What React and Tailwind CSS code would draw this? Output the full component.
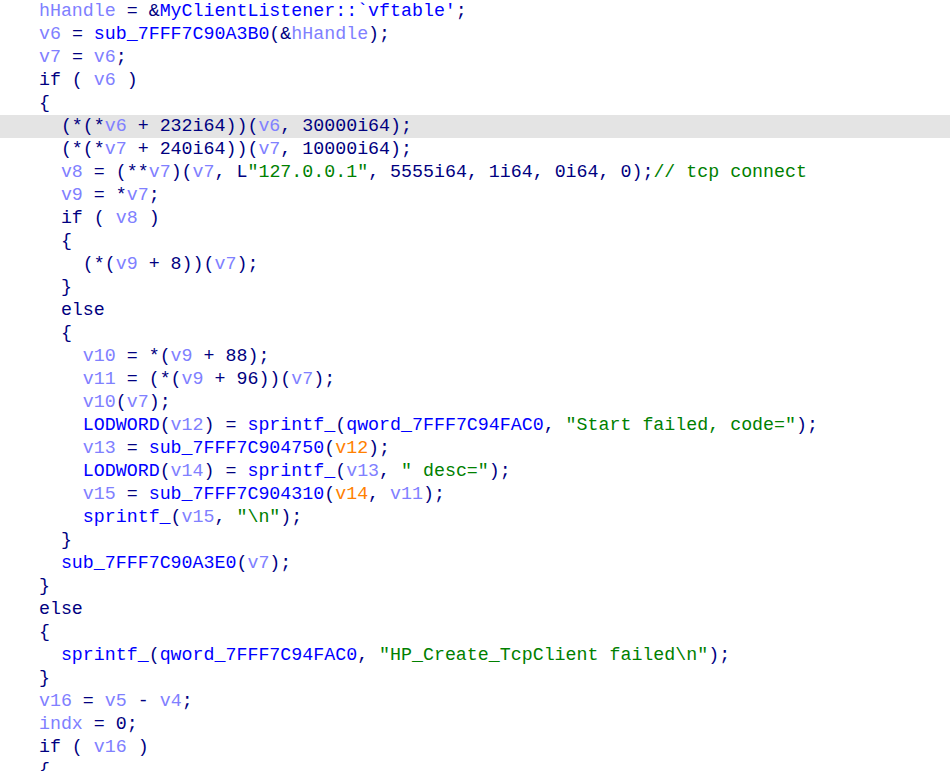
import React from "react";

const C = {
  N: "text-[#000080]",
  B: "text-[#0000ff]",
  V: "text-[#8080ff]",
  G: "text-[#008000]",
  O: "text-[#ff8000]",
};

const L = (indent, ...segs) => ({ indent, segs });

const lines = [
  L(2, ["V", "hHandle"], ["N", " = &"], ["B", "MyClientListener::`vftable'"], ["N", ";"]),
  L(2, ["V", "v6"], ["N", " = "], ["B", "sub_7FFF7C90A3B0"], ["N", "(&"], ["V", "hHandle"], ["N", ");"]),
  L(2, ["V", "v7"], ["N", " = "], ["V", "v6"], ["N", ";"]),
  L(2, ["N", "if ( "], ["V", "v6"], ["N", " )"]),
  L(2, ["N", "{"]),
  { ...L(4, ["N", "(*(*"], ["V", "v6"], ["N", " + 232i64))("], ["V", "v6"], ["N", ", 30000i64);"]), hl: true },
  L(4, ["N", "(*(*"], ["V", "v7"], ["N", " + 240i64))("], ["V", "v7"], ["N", ", 10000i64);"]),
  L(4, ["V", "v8"], ["N", " = (**"], ["V", "v7"], ["N", ")("], ["V", "v7"], ["N", ", L"], ["G", "\"127.0.0.1\""], ["N", ", 5555i64, 1i64, 0i64, 0);"], ["G", "// tcp connect"]),
  L(4, ["V", "v9"], ["N", " = *"], ["V", "v7"], ["N", ";"]),
  L(4, ["N", "if ( "], ["V", "v8"], ["N", " )"]),
  L(4, ["N", "{"]),
  L(6, ["N", "(*("], ["V", "v9"], ["N", " + 8))("], ["V", "v7"], ["N", ");"]),
  L(4, ["N", "}"]),
  L(4, ["N", "else"]),
  L(4, ["N", "{"]),
  L(6, ["V", "v10"], ["N", " = *("], ["V", "v9"], ["N", " + 88);"]),
  L(6, ["V", "v11"], ["N", " = (*("], ["V", "v9"], ["N", " + 96))("], ["V", "v7"], ["N", ");"]),
  L(6, ["V", "v10"], ["N", "("], ["V", "v7"], ["N", ");"]),
  L(6, ["B", "LODWORD"], ["N", "("], ["V", "v12"], ["N", ") = "], ["B", "sprintf_"], ["N", "("], ["B", "qword_7FFF7C94FAC0"], ["N", ", "], ["G", "\"Start failed, code=\""], ["N", ");"]),
  L(6, ["V", "v13"], ["N", " = "], ["B", "sub_7FFF7C904750"], ["N", "("], ["O", "v12"], ["N", ");"]),
  L(6, ["B", "LODWORD"], ["N", "("], ["V", "v14"], ["N", ") = "], ["B", "sprintf_"], ["N", "("], ["V", "v13"], ["N", ", "], ["G", "\" desc=\""], ["N", ");"]),
  L(6, ["V", "v15"], ["N", " = "], ["B", "sub_7FFF7C904310"], ["N", "("], ["O", "v14"], ["N", ", "], ["V", "v11"], ["N", ");"]),
  L(6, ["B", "sprintf_"], ["N", "("], ["V", "v15"], ["N", ", "], ["G", "\"\\n\""], ["N", ");"]),
  L(4, ["N", "}"]),
  L(4, ["B", "sub_7FFF7C90A3E0"], ["N", "("], ["V", "v7"], ["N", ");"]),
  L(2, ["N", "}"]),
  L(2, ["N", "else"]),
  L(2, ["N", "{"]),
  L(4, ["B", "sprintf_"], ["N", "("], ["B", "qword_7FFF7C94FAC0"], ["N", ", "], ["G", "\"HP_Create_TcpClient failed\\n\""], ["N", ");"]),
  L(2, ["N", "}"]),
  L(2, ["V", "v16"], ["N", " = "], ["V", "v5"], ["N", " - "], ["V", "v4"], ["N", ";"]),
  L(2, ["V", "indx"], ["N", " = 0;"]),
  L(2, ["N", "if ( "], ["V", "v16"], ["N", " )"]),
  L(2, ["N", "{"]),
];

export default function App() {
  return (
    <div className="w-[950px] h-[771px] overflow-hidden bg-white">
      <div
        className="text-[18.3px] leading-[23px] whitespace-pre"
        style={{ fontFamily: '"Liberation Mono", monospace' }}
      >
        {lines.map((ln, i) => (
          <div key={i} className={"h-[23px] pl-[17px] " + (ln.hl ? "bg-[#e4e4e4]" : "")}>
            <span>{" ".repeat(ln.indent)}</span>
            {ln.segs.map(([c, t], j) => (
              <span key={j} className={C[c]}>
                {t}
              </span>
            ))}
          </div>
        ))}
      </div>
    </div>
  );
}
